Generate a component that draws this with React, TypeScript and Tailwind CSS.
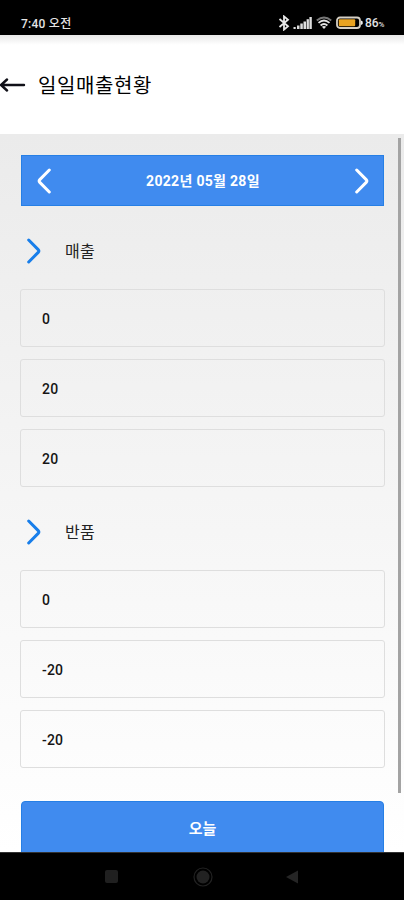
import React from "react";

function Chevron({ left = false, color }: { left?: boolean; color: string }) {
  return (
    <svg width="14" height="26" viewBox="0 0 14 26" fill="none" className="shrink-0">
      <path
        d={left ? "M12.3 2 2.8 11.6Q1.4 13 2.8 14.4L12.3 24" : "M1.7 2 11.2 11.6Q12.6 13 11.2 14.4L1.7 24"}
        stroke={color}
        strokeWidth="3"
        strokeLinecap="round"
      />
    </svg>
  );
}

function StatusBar() {
  return (
    <div className="flex h-[35px] shrink-0 items-center bg-black pr-[20px] pl-[21px] pt-[11px] text-[12px] leading-[24px] font-medium text-[#e4e4e4]">
      <span className="relative top-px tracking-[0.25px]">7:40 오전</span>
      <div className="ml-auto flex items-center">
        <svg width="12" height="16" viewBox="0 0 12 16" fill="none" stroke="#e8e8e8" strokeWidth="1.8">
          <path d="M1.5 4 10 11.2 6 14.6V1.4L10 4.8 1.5 12" />
        </svg>
        <svg width="20" height="14" viewBox="0 0 20 14" fill="#dcdcdc" className="ml-[3px]">
          <rect x="0.5" y="11" width="2.2" height="2" />
          <rect x="4" y="9.5" width="2.5" height="3.5" />
          <rect x="7.3" y="7.5" width="2.5" height="5.5" />
          <rect x="10.5" y="5.5" width="2.5" height="7.5" />
          <rect x="13.6" y="3.2" width="2.3" height="9.8" />
          <rect x="16.4" y="1" width="2.4" height="12" />
        </svg>
        <svg width="16" height="14" viewBox="0 0 16 14" fill="none" strokeWidth="1.9" className="ml-[3px]">
          <path d="M.8 4.5Q8-1.4 15.2 4.5" stroke="#777" />
          <path d="M2.5 6.9Q8 2.2 13.5 6.9" stroke="#e4e4e4" />
          <path d="M4.6 9.4Q8 6.6 11.4 9.4" stroke="#e4e4e4" />
          <path d="M5.9 10.7Q8 9.2 10.1 10.7L8 13Z" fill="#e4e4e4" />
        </svg>
        <svg width="27" height="14" viewBox="0 0 27 14" fill="none" className="ml-[4px]">
          <rect x="1" y="1.5" width="23" height="10.5" rx="3" stroke="#d6d0c5" strokeWidth="1.8" />
          <rect x="2.8" y="3.2" width="16.4" height="7.1" rx="1" fill="#e9a321" />
          <path d="M25 4.5 26.7 5.5V8L25 9Z" fill="#eee" />
        </svg>
        <span className="relative top-px ml-[2px]">86<span className="text-[8px] tracking-[-0.5px]">%</span></span>
      </div>
    </div>
  );
}

function Section({ title, values }: { title: string; values: string[] }) {
  return (
    <section>
      <div className="flex h-[83px] items-center pl-[6px] pb-px pt-[8px] text-[16px] text-[#222]">
        <Chevron color="#187eea" />
        <h2 className="mt-[2px] ml-[24px] tracking-[0.3px]">{title}</h2>
      </div>
      <div className="-mx-px flex flex-col gap-[12px]">
        {values.map((value, i) => (
          <div key={i} className="flex h-[58px] items-center rounded-[3px] border border-[#dedede] pt-[2px] pl-[21px] text-[14px] font-medium tracking-[0.2px] text-[#151515]">
            {value}
          </div>
        ))}
      </div>
    </section>
  );
}

export default function App() {
  return (
    <div className="flex h-[900px] w-[404px] flex-col overflow-hidden bg-white font-['Roboto','Noto_Sans_CJK_KR',sans-serif]">
      <StatusBar />
      <header className="flex h-[99px] shrink-0 items-center bg-linear-to-b from-[#e8e8e8] to-white to-10% text-black">
        <svg width="26" height="20" viewBox="0 0 26 20" fill="none" stroke="#101018" strokeWidth="2.4" strokeLinecap="round">
          <path d="M24 10H1M7 4.5 1 10 7 15.5" />
        </svg>
        <h1 className="mt-[3px] ml-[12px] text-[20px] leading-none tracking-[0.6px]">일일매출현황</h1>
      </header>
      <main className="flex min-h-0 grow bg-linear-to-b from-[#ebebeb] to-white">
        <div className="ml-[21px] w-[363px] shrink-0 pt-[21px]">
          <div className="flex h-[51px] items-center justify-between border border-[#267fe5] bg-[#408bef] pr-[14px] pl-[15px] text-[14px] font-bold text-white">
            <Chevron left color="white" />
            <span className="mt-[2px] tracking-[0.3px]">2022년 05월 28일</span>
            <Chevron color="white" />
          </div>
          <Section title="매출" values={["0", "20", "20"]} />
          <Section title="반품" values={["0", "-20", "-20"]} />
          <button className="mt-[33px] block h-[57px] w-full rounded-[4px] border border-[#267fe5] bg-[#408bef] text-[15px] font-bold text-white">
            오늘
          </button>
        </div>
        <div className="mt-[4px] ml-[14px] h-[655px] w-[3px] bg-[#a3a3a3]" />
      </main>
      <nav className="flex h-[48px] shrink-0 items-center border-t border-[#333] bg-black pl-[105px] z-10">
        <div className="size-[13px] rounded-[2px] bg-[#202020]" />
        <svg width="20" height="20" viewBox="0 0 20 20" className="ml-[75px]">
          <circle cx="10" cy="10" r="9" fill="none" stroke="#222" strokeWidth="1.2" />
          <circle cx="10" cy="10" r="6.5" fill="#222" />
        </svg>
        <svg width="13" height="14" viewBox="0 0 13 14" className="ml-[73px]">
          <path d="M0 7 12 .5V13.5Z" fill="#252525" />
        </svg>
      </nav>
    </div>
  );
}
